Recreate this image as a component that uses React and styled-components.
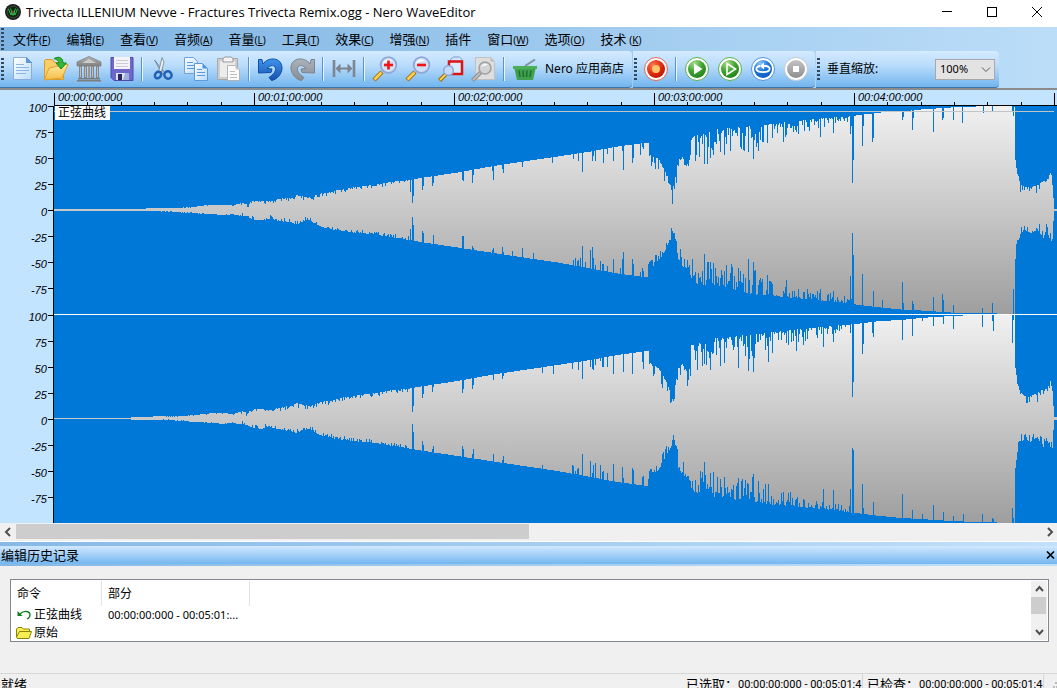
import styled, { createGlobalStyle } from "styled-components";

const App = () => {
  return (
    <Window>
      <GlobalStyle />
      <TitleBar>
        <AppIcon />
        <Title>
          Trivecta ILLENIUM Nevve - Fractures Trivecta Remix.ogg - Nero
          WaveEditor
        </Title>
        <WindowButtons />
      </TitleBar>
      <Menu />
      <Toolbars />
      <Editor />
      <HorizontalScroll />
      <History />
      <Status />
    </Window>
  );
};

export default App;

/* ---------- data ---------- */

const MENU = [
  ["文件", "F"],
  ["编辑", "E"],
  ["查看", "V"],
  ["音频", "A"],
  ["音量", "L"],
  ["工具", "T"],
  ["效果", "C"],
  ["增强", "N"],
  ["插件"],
  ["窗口", "W"],
  ["选项", "O"],
  ["技术 ", "K"],
];

const MINUTES = ["00", "01", "02", "03", "04", "05"];
const LEVELS = [100, 75, 50, 25, 0, -25, -50, -75];

// x, upper edge, lower edge of the left channel
const ENVELOPE = [
  [54, 209, 211], [145, 209, 211], [160, 208, 211], [180, 208, 212],
  [195, 207, 213], [212, 205, 214], [222, 205, 215], [233, 206, 214],
  [241, 203, 216], [247, 205, 216], [252, 201, 219], [262, 201, 220],
  [270, 202, 218], [280, 199, 221], [290, 198, 222], [296, 195, 224],
  [303, 197, 221], [310, 198, 220], [318, 194, 226], [328, 193, 228],
  [335, 191, 230], [345, 189, 231], [352, 188, 232], [375, 185, 234],
  [392, 182, 237], [405, 181, 239], [417, 179, 241], [457, 173, 247],
  [490, 167, 252], [523, 162, 257], [557, 157, 262], [590, 152, 268],
  [617, 147, 273], [647, 143, 277], [648, 143, 272], [649, 154, 262],
  [652, 157, 266], [658, 159, 261], [663, 168, 253], [667, 176, 246],
  [671, 186, 237], [672, 191, 231], [674, 182, 234], [676, 171, 246],
  [678, 160, 259], [682, 156, 266], [685, 161, 268], [688, 166, 267],
  [690, 154, 275], [691, 136, 283], [700, 135, 284], [715, 130, 288],
  [735, 128, 291], [755, 126, 294], [775, 124, 296], [800, 121, 298],
  [830, 118, 301], [855, 116, 304], [880, 113, 307], [900, 112, 309],
  [920, 110, 310], [950, 108, 312], [975, 107, 313], [996, 106, 313],
  [997, 106, 314], [1013, 106, 314], [1014, 107, 314], [1015, 160, 259],
  [1017, 173, 245], [1020, 184, 234], [1024, 187, 230], [1030, 188, 233],
  [1037, 185, 229], [1043, 181, 238], [1046, 181, 229], [1050, 173, 241],
  [1052, 177, 240], [1053, 198, 221], [1054, 209, 211], [1057, 209, 211],
];

// short dips: x, upper edge, lower edge (0 keeps the envelope)
const LEFT_DIPS = [
  [410, 192, 229], [412, 203, 217], [413, 196, 225], [422, 190, 231],
  [423, 186, 233], [432, 186, 0], [433, 183, 235], [462, 180, 236],
  [463, 181, 236], [472, 183, 246], [473, 175, 248], [492, 171, 250],
  [493, 180, 248], [502, 169, 247], [503, 173, 252], [512, 0, 251],
  [522, 167, 248], [533, 0, 253], [552, 163, 0], [573, 159, 260],
  [575, 0, 258], [577, 0, 261], [578, 161, 260], [580, 0, 258],
  [582, 172, 246], [585, 0, 262], [590, 0, 250], [592, 161, 247],
  [593, 156, 258], [595, 161, 265], [600, 0, 261], [602, 0, 264],
  [603, 163, 264], [607, 154, 266], [613, 161, 259], [620, 0, 268],
  [622, 151, 259], [623, 170, 252], [632, 163, 259], [633, 158, 264],
  [640, 155, 272], [642, 147, 268], [643, 149, 271], [704, 164, 254],
  [707, 164, 262], [708, 147, 262], [710, 158, 262], [713, 155, 263],
  [720, 152, 278], [724, 155, 271], [730, 151, 273], [740, 147, 271],
  [743, 150, 274], [748, 152, 259], [753, 159, 262], [754, 140, 271],
  [762, 142, 279], [767, 143, 275], [783, 142, 0], [786, 135, 280],
  [798, 134, 289], [820, 137, 289], [833, 133, 291], [850, 134, 276],
  [851, 126, 299], [852, 183, 233], [853, 160, 255], [862, 146, 274],
  [863, 126, 0], [872, 142, 0], [873, 138, 291], [882, 0, 300],
  [902, 120, 282], [903, 117, 303], [912, 130, 301], [913, 118, 304],
  [933, 132, 297], [942, 120, 294], [943, 118, 300], [953, 120, 305],
  [962, 123, 0], [982, 0, 308], [983, 113, 0], [992, 112, 303],
  [1012, 111, 0], [1013, 116, 289],
];

const RIGHT_DIPS = [
  [412, 412, 424], [413, 406, 432], [422, 398, 441], [423, 394, 445],
  [432, 392, 449], [433, 387, 446], [462, 393, 446], [463, 389, 449],
  [472, 389, 454], [473, 385, 449], [493, 380, 454], [502, 379, 460],
  [503, 376, 456], [542, 373, 465], [553, 374, 0], [572, 369, 465],
  [573, 0, 466], [575, 0, 471], [577, 0, 469], [578, 370, 468],
  [582, 379, 454], [590, 367, 461], [592, 369, 473], [593, 370, 465],
  [595, 365, 463], [600, 361, 465], [602, 367, 472], [603, 367, 471],
  [607, 367, 473], [613, 374, 464], [622, 0, 467], [623, 372, 478],
  [632, 374, 468], [633, 0, 470], [642, 362, 477], [643, 369, 476],
  [704, 364, 462], [710, 370, 473], [713, 353, 472], [720, 366, 479],
  [724, 363, 477], [733, 350, 485], [738, 368, 478], [745, 356, 480],
  [748, 371, 484], [752, 356, 477], [753, 372, 474], [758, 342, 481],
  [765, 350, 484], [768, 362, 484], [772, 353, 0], [781, 340, 493],
  [788, 345, 493], [796, 351, 499], [803, 345, 499], [823, 347, 489],
  [833, 342, 490], [850, 333, 489], [852, 397, 448], [853, 382, 450],
  [862, 354, 484], [863, 344, 508], [872, 333, 0], [873, 337, 502],
  [902, 340, 494], [912, 336, 510], [922, 321, 514], [933, 326, 505],
  [943, 324, 512], [953, 329, 516], [963, 0, 514], [982, 327, 514],
  [992, 321, 518], [993, 331, 519], [1012, 343, 508], [1013, 320, 518],
];

/* ---------- wave form ---------- */

const random = (seed) => {
  let state = seed;
  return () => {
    state = (state * 1103515245 + 12345) % 2147483648;
    return state / 2147483648;
  };
};

const sample = (x) => {
  const i = Math.max(
    1,
    ENVELOPE.findIndex((point) => point[0] >= x)
  );
  const [x0, top0, bottom0] = ENVELOPE[i - 1];
  const [x1, top1, bottom1] = ENVELOPE[i];
  const part = (x - x0) / (x1 - x0);
  return [top0 + (top1 - top0) * part, bottom0 + (bottom1 - bottom0) * part];
};

const roughness = (x) => {
  if (x < 160) return 0;
  if (x < 240) return 1;
  if (x < 410) return 4;
  if (x < 648) return 0;
  if (x < 691) return 14;
  if (x < 760) return 27;
  if (x < 850) return 18 - (x - 760) / 8;
  if (x > 1015 && x < 1053) return 9;
  return 0;
};

const channelPath = (shift, seed, dips, quietUntil) => {
  const next = random(seed);
  const byX = new Map(dips.map((dip) => [dip[0], dip]));
  const upper = [];
  const lower = [];
  for (let x = 54; x < 1057; x++) {
    const rough = roughness(x);
    // the loud middle part is ragged, the rest has only rare notches
    const power = x > 690 && x < 760 ? 2 : 3;
    const [top, bottom] = sample(x);
    const dip = byX.get(x) || [];
    let y1 = Math.floor(top + shift + rough * next() ** power);
    let y2 = Math.ceil(bottom + shift - rough * next() ** power);
    if (x < quietUntil) {
      y1 = 418;
      y2 = 419;
    }
    upper.push(`V${dip[1] || y1}H${x + 1}`);
    lower.unshift(`V${dip[2] || y2}H${x}`);
  }
  return `M54 ${209 + Math.floor(shift)}${upper.join("")}${lower.join("")}Z`;
};

const LEFT_PATH = channelPath(0, 71, LEFT_DIPS, 0);
const RIGHT_PATH = channelPath(208.5, 1234, RIGHT_DIPS, 131);

const Wave = () => (
  <WaveSvg
    viewBox="54 106 1003 417"
    preserveAspectRatio="none"
    shapeRendering="crispEdges"
  >
    <defs>
      {[106, 315].map((y) => (
        <linearGradient
          key={y}
          id={`wave${y}`}
          gradientUnits="userSpaceOnUse"
          x1="0"
          x2="0"
          y1={y}
          y2={y + 208}
        >
          <stop offset="0" stopColor="#f1f1f1" />
          <stop offset="0.5" stopColor="#c8c8c8" />
          <stop offset="1" stopColor="#9e9e9e" />
        </linearGradient>
      ))}
    </defs>
    <path d={LEFT_PATH} fill="url(#wave106)" />
    <path d={RIGHT_PATH} fill="url(#wave315)" />
    <rect x="54" y="314" width="1003" height="1" fill="#fff" />
    <rect x="54" y="111" width="1000" height="1" fill="#c0c4c8" />
  </WaveSvg>
);

const Editor = () => (
  <EditorGrid>
    <Scale>
      {["left", "right"].map((channel) => (
        <ScaleGroup key={channel}>
          {LEVELS.map((level) => (
            <Level key={level}>{level}</Level>
          ))}
        </ScaleGroup>
      ))}
    </Scale>
    <Track>
      <Ruler>
        {MINUTES.map((minute) => (
          <Minute key={minute}>
            {minute !== "05" && <Time>00:{minute}:00:000</Time>}
            {[0, 1, 2, 3, 4, 5].map((tick) => (
              <Tick key={tick} $major={tick === 0} />
            ))}
          </Minute>
        ))}
      </Ruler>
      <WaveArea>
        <Wave />
        <ClipName>正弦曲线</ClipName>
      </WaveArea>
    </Track>
  </EditorGrid>
);

/* ---------- title, menu, toolbars ---------- */

const AppIcon = () => (
  <svg width="16" height="16" viewBox="0 0 16 16">
    <circle cx="8" cy="8" r="8" fill="#1c1c1c" />
    <circle cx="8" cy="8" r="6" fill="#0b2a10" stroke="#3c4a3d" />
    <path
      d="M3.500 5 6 11l1.500-4M12.500 5 10 11 8.500 7M5.500 4.500 8 11.500l2.500-7"
      fill="none"
      stroke="#35b54a"
    />
    <circle cx="8" cy="8" r="1" fill="#7a3b2a" />
  </svg>
);

const WindowButtons = () => (
  <Controls>
    <ControlButton aria-label="最小化">
      <svg width="12" height="12" shapeRendering="crispEdges">
        <path d="M1 5.500h10" stroke="#000" />
      </svg>
    </ControlButton>
    <ControlButton aria-label="最大化">
      <svg width="12" height="12" shapeRendering="crispEdges">
        <path d="M1.500 1.500h9v9h-9z" stroke="#000" fill="none" />
      </svg>
    </ControlButton>
    <ControlButton aria-label="关闭">
      <svg width="12" height="12">
        <path d="m1 1 10 10M11 1 1 11" stroke="#000" />
      </svg>
    </ControlButton>
  </Controls>
);

const Menu = () => (
  <MenuBar>
    <Grip />
    {MENU.map(([name, letter]) => (
      <MenuItem key={name}>
        {name}
        {letter && (
          <Mnemonic>
            (<u>{letter}</u>)
          </Mnemonic>
        )}
      </MenuItem>
    ))}
  </MenuBar>
);

const Toolbars = () => (
  <ToolbarRow>
    <Band $width={632}>
      <Grip />
      <Tool label="新建"><NewIcon /></Tool>
      <Tool label="打开"><OpenIcon /></Tool>
      <Tool label="媒体库"><LibraryIcon /></Tool>
      <Tool label="保存"><SaveIcon /></Tool>
      <Separator />
      <Tool label="剪切"><CutIcon /></Tool>
      <Tool label="复制"><CopyIcon /></Tool>
      <Tool label="粘贴"><PasteIcon /></Tool>
      <Separator />
      <Tool label="撤消"><UndoIcon /></Tool>
      <Tool label="重做"><UndoIcon redo /></Tool>
      <Separator />
      <Tool label="适合窗口"><FitIcon /></Tool>
      <Separator />
      <Tool label="放大"><ZoomIcon sign="plus" /></Tool>
      <Tool label="缩小"><ZoomIcon sign="minus" /></Tool>
      <Tool label="缩放选区"><ZoomAreaIcon /></Tool>
      <Tool label="缩放页面"><ZoomPageIcon /></Tool>
      <Separator />
      <StoreButton>
        <BasketIcon />
        Nero 应用商店
      </StoreButton>
    </Band>
    <Band $width={182}>
      <Grip />
      <Tool label="录音"><RoundIcon tone="red" /></Tool>
      <Separator />
      <Tool label="播放">
        <RoundIcon tone="green"><path d="M10 7.500 18.500 13 10 18.500z" fill="#fff" /></RoundIcon>
      </Tool>
      <Tool label="播放选区">
        <RoundIcon tone="green">
          <path d="M10 7.500 18.500 13 10 18.500z" fill="none" stroke="#fff" strokeWidth="1.600" />
        </RoundIcon>
      </Tool>
      <Tool label="循环">
        <RoundIcon tone="blue">
          <path
            d="M10 10c-3 .5-4 2-3.500 3.500 1 3.500 12 3.500 13 0 .5-1.500-.5-3-3.500-3.500h-3"
            fill="none"
            stroke="#fff"
            strokeWidth="1.800"
          />
          <path d="M14 6.500v7L10 10z" fill="#fff" />
        </RoundIcon>
      </Tool>
      <Tool label="停止">
        <RoundIcon tone="grey"><path d="M10 10h6v6h-6z" fill="#fff" /></RoundIcon>
      </Tool>
    </Band>
    <Band $width={183}>
      <Grip />
      <ZoomLabel htmlFor="vertical-zoom">垂直缩放:</ZoomLabel>
      <SelectBox>
        <Select id="vertical-zoom" defaultValue="100%">
          <option>50%</option>
          <option>100%</option>
          <option>200%</option>
        </Select>
        <SelectArrow width="10" height="6" viewBox="0 0 10 6">
          <path d="m1 .5 4 4 4-4" fill="none" stroke="#555" />
        </SelectArrow>
      </SelectBox>
    </Band>
    <Gradients />
  </ToolbarRow>
);

const Tool = ({ label, children }) => (
  <ToolButton aria-label={label}>{children}</ToolButton>
);

/* ---------- toolbar icons ---------- */

const Icon = ({ children }) => (
  <svg width="26" height="26" viewBox="0 0 26 26">
    {children}
  </svg>
);

const Gradients = () => (
  <svg width="0" height="0">
    <defs>
      <linearGradient id="paper" x2="1" y2="1">
        <stop offset="0" stopColor="#fff" />
        <stop offset="1" stopColor="#b9dcfa" />
      </linearGradient>
      <linearGradient id="folder" x2="0" y2="1">
        <stop offset="0" stopColor="#ffe9a0" />
        <stop offset="1" stopColor="#f3bd45" />
      </linearGradient>
      <linearGradient id="stone" x2="0" y2="1">
        <stop offset="0" stopColor="#b4b4b4" />
        <stop offset="1" stopColor="#808080" />
      </linearGradient>
      <linearGradient id="arrow" x2="0" y2="1">
        <stop offset="0" stopColor="#3f95ee" />
        <stop offset="1" stopColor="#1550ae" />
      </linearGradient>
      <linearGradient id="dimArrow" x2="0" y2="1">
        <stop offset="0" stopColor="#adb3ba" />
        <stop offset="1" stopColor="#868c94" />
      </linearGradient>
      <radialGradient id="red" cx="0.35" cy="0.3" r="0.8">
        <stop offset="0" stopColor="#ff7a55" />
        <stop offset="0.6" stopColor="#e0260d" />
        <stop offset="1" stopColor="#b01505" />
      </radialGradient>
      <radialGradient id="green" cx="0.35" cy="0.2" r="0.9">
        <stop offset="0" stopColor="#a5dd8c" />
        <stop offset="0.5" stopColor="#3fa32e" />
        <stop offset="1" stopColor="#1c7d16" />
      </radialGradient>
      <radialGradient id="blue" cx="0.35" cy="0.2" r="0.9">
        <stop offset="0" stopColor="#8fc5fb" />
        <stop offset="0.5" stopColor="#1a73dd" />
        <stop offset="1" stopColor="#0f57b8" />
      </radialGradient>
      <linearGradient id="grey" x2="0" y2="1">
        <stop offset="0" stopColor="#c4c4c4" />
        <stop offset="1" stopColor="#8e8e8e" />
      </linearGradient>
    </defs>
  </svg>
);

const NewIcon = () => (
  <Icon>
    <path d="M3.500 1.500h13l5 5v17h-18z" fill="url(#paper)" stroke="#86aedb" />
    <path d="M16.500 1.500v5h5z" fill="#5b9be0" stroke="#5f92cf" />
    <path d="M6 8.500h8M6 11.500h13M6 14.500h13M6 17.500h10" stroke="#8db3e0" />
  </Icon>
);

const OpenIcon = () => (
  <Icon>
    <path d="M1.500 23.500V4.500l1-1h7l2 3h9v17z" fill="#f7cf66" stroke="#d99b2a" />
    <path d="M1.500 24 6 12l9-2 3-1.500h7L19 22z" fill="url(#folder)" stroke="#dfa02f" />
    <path d="M11 2.500c6-3 9 0 9 4.500h3.500l-5.500 6-5-6h3c0-2-2-3.500-5-4.500z" fill="#36b53b" stroke="#178a26" />
  </Icon>
);

const LibraryIcon = () => (
  <Icon>
    <path d="M13 .5 25 6v4H1V6z" fill="url(#stone)" stroke="#808080" strokeWidth=".8" />
    <path d="m6 7 7-4 7 4z" fill="#ccc" />
    <path d="M2 22h22v1.500H2zM1 24h24v1.500H1z" fill="#7c7c7c" />
    <path d="M4.500 10v12M9.500 10v12M16.500 10v12M21.500 10v12" stroke="#858585" strokeWidth="3" />
    <path d="M4.500 11v10M9.500 11v10M16.500 11v10M21.500 11v10" stroke="#bdbdbd" />
    <path d="M13 10v12" stroke="#989898" strokeWidth="2" />
  </Icon>
);

const SaveIcon = () => (
  <Icon>
    <path d="M2 1.500h22v23H5l-3-3z" fill="#6f68cc" stroke="#4f49ac" />
    <path d="M5 1h16v12H5z" fill="#f4f4f8" />
    <path d="M7 4.500h12M7 7.500h12M7 10.500h12" stroke="#ccc8d8" />
    <path d="M7 17h13v7H7z" fill="#dce4ef" />
    <path d="M9 18h4v6H9z" fill="#2b2560" />
    <path d="M16 17h4v7h-6z" fill="#9faedc" />
  </Icon>
);

const CutIcon = () => (
  <Icon>
    <path d="M4.500 4 15 17l-2.500 1.500z" fill="#aeb9c6" stroke="#70808f" strokeWidth=".8" />
    <path d="M12 1.500 14 6l-3 11-2.500-.5z" fill="#eef1f4" stroke="#70808f" strokeWidth=".8" />
    <ellipse cx="8" cy="19" rx="2.800" ry="3.500" transform="rotate(40 8 19)" fill="none" stroke="#1f62b8" strokeWidth="2.500" />
    <ellipse cx="18" cy="19" rx="3.500" ry="3.800" transform="rotate(-40 18 19)" fill="none" stroke="#1f62b8" strokeWidth="2.500" />
  </Icon>
);

const CopyIcon = () => (
  <Icon>
    <path d="M1.500 1.500h9l4 4v12h-13z" fill="url(#paper)" stroke="#6ea3df" />
    <path d="M4 6.500h6M4 9.500h7M4 12.500h7" stroke="#5b98dd" />
    <path d="M11.500 7.500h8l5 5v12h-13z" fill="url(#paper)" stroke="#5b98dd" />
    <path d="M19.500 7.500v5h5z" fill="#4a94e6" />
    <path d="M14 13.500h5M14 16.500h8M14 19.500h8" stroke="#5b98dd" />
  </Icon>
);

const PasteIcon = () => (
  <Icon>
    <path d="M1.500 2.500h20v21h-20z" fill="#cdcdcd" stroke="#a8a8a8" />
    <path d="M4 5h15v16H4z" fill="#ececec" />
    <path d="M7 2.500 9 1h6l2 1.500V6H7z" fill="#f3f3f3" stroke="#999" />
    <path d="M11.500 9.500h8l4 4v11h-12z" fill="#fafafa" stroke="#b4b4b4" />
    <path d="M19.500 9.500v4h4z" fill="#c8c8c8" />
    <path d="M14 15.500h5M14 18.500h7M14 21.500h7" stroke="#bbb" />
  </Icon>
);

const UndoIcon = ({ redo }) => (
  <Icon>
    <path
      transform={redo ? "matrix(-1 0 0 1 26 0)" : undefined}
      d="M1.500 3.500H5L6 8C11 .5 25 1 25 12c0 6-5 11.500-10.500 12.500l-2.500-3c5-3 8-7.500 6-10.500-2-2.500-5-1.500-8 1.500l5 .5-1 3.500-12.500.5z"
      fill={redo ? "url(#dimArrow)" : "url(#arrow)"}
      stroke={redo ? "#7c848e" : "#0f4ea6"}
    />
  </Icon>
);

const FitIcon = () => (
  <Icon>
    <path d="M3 4v17M23 4v17" stroke="#7c8590" strokeWidth="2.600" />
    <path d="M6 12.500h14" stroke="#7c8590" strokeWidth="2" />
    <path d="m4.500 12.500 5-5v10zM21.500 12.500l-5-5v10z" fill="#7c8590" />
  </Icon>
);

const ZoomIcon = ({ sign }) => (
  <Icon>
    <path d="m2 24 8-8" stroke="#9c6a10" strokeWidth="4.500" />
    <path d="m2.500 23.500 7-7" stroke="#ffd24a" strokeWidth="2.500" />
    <circle cx="16.500" cy="9" r="7.800" fill="#cfe0f7" stroke="#8fa6da" strokeWidth="1.800" />
    <path d="M10.500 8c1-4 6-6 9.500-3-4 0-7 1-9.500 3z" fill="#fff" />
    <path d="M12 9h9" stroke="#f01414" strokeWidth="2.600" />
    {sign === "plus" && <path d="M16.500 4.500v9" stroke="#f01414" strokeWidth="2.600" />}
  </Icon>
);

const ZoomAreaIcon = () => (
  <Icon>
    <path d="M12.500 5V3.500l3-2.500h6l2.500 2.500V5" fill="#cfe3f8" stroke="#7b9cc8" />
    <path d="M11 5.500h13v12.500h-13z" fill="#dcebfb" stroke="#dc1414" strokeWidth="2.500" />
    <path d="m1.500 24.500 7-7" stroke="#9c6a10" strokeWidth="4" />
    <path d="m2 24 6-6" stroke="#ffd24a" strokeWidth="2" />
    <circle cx="10.500" cy="14.500" r="4.800" fill="#c4daf6" stroke="#8fa6da" strokeWidth="1.500" />
  </Icon>
);

const ZoomPageIcon = () => (
  <Icon>
    <path d="M4.500 1.500h15l4 4v18h-19z" fill="#dedede" stroke="#c0c0c0" />
    <path d="M19.500 1.500v4h4z" fill="#bbb" />
    <path d="m1.500 24.500 8-8" stroke="#909090" strokeWidth="4" />
    <path d="m2 24 7-7" stroke="#bbb" strokeWidth="2" />
    <circle cx="14" cy="12" r="6" fill="#d4d4d4" stroke="#a2a2a2" strokeWidth="1.600" />
    <path d="M10 11c1-3 5-4 7-2-3 0-5 1-7 2z" fill="#fff" />
  </Icon>
);

const BasketIcon = () => (
  <Icon>
    <path d="M13 10 23 3.500" stroke="#7d9299" strokeWidth="2" />
    <path d="M1 10h24v3H1z" fill="#4caf58" />
    <path d="M2.500 13h21l-2.500 11H5z" fill="#3fa04d" />
    <path d="M7 14.500 8 21M11 14.500l.5 6.500M15 14.500 14.500 21M19 14.500 18 21" stroke="#1f6f31" strokeWidth="1.500" />
  </Icon>
);

const RoundIcon = ({ tone, children }) => (
  <Icon>
    <circle
      cx="13"
      cy="13"
      r="11.500"
      fill="#fff"
      stroke={{ red: "#e2654f", green: "#58b048", blue: "#4b93df", grey: "#c5c9ce" }[tone]}
    />
    <circle cx="13" cy="13" r="9" fill={`url(#${tone})`} />
    {tone === "red" && <circle cx="13" cy="13" r="4" fill="#ffc56b" />}
    {children}
  </Icon>
);

/* ---------- lower part ---------- */

const HorizontalScroll = () => (
  <ScrollX>
    <ArrowButton aria-label="向左"><Chevron d="M6 1 2 5l4 4" /></ArrowButton>
    <Rail>
      <ThumbX />
    </Rail>
    <ArrowButton aria-label="向右"><Chevron d="m3 1 4 4-4 4" /></ArrowButton>
  </ScrollX>
);

const Chevron = ({ d }) => (
  <svg width="9" height="10" viewBox="0 0 9 10">
    <path d={d} fill="none" stroke="#505050" strokeWidth="2" />
  </svg>
);

const History = () => (
  <Panel>
    <PanelTitle>
      编辑历史记录
      <CloseButton aria-label="关闭">
        <svg width="9" height="8" viewBox="0 0 9 8">
          <path d="m1 .5 7 7M8 .5l-7 7" stroke="#000" strokeWidth="1.600" />
        </svg>
      </CloseButton>
    </PanelTitle>
    <ListBox>
      <Table>
        <thead>
          <tr>
            <HeadCell $width={91}>命令</HeadCell>
            <HeadCell $width={148}>部分</HeadCell>
          </tr>
        </thead>
        <tbody>
          <tr>
            <Cell>
              <Command>
                <svg width="16" height="14" viewBox="0 0 16 14">
                  <path d="M4 6c4-4 10-3 10 1 0 2-1 3-3 4" fill="none" stroke="#0a7d1c" strokeWidth="1.300" />
                  <path d="M1.500 3v5h5z" fill="#0a7d1c" />
                </svg>
                正弦曲线
              </Command>
            </Cell>
            <TimeCell>00:00:00:000 - 00:05:01:...</TimeCell>
          </tr>
          <tr>
            <Cell>
              <Command>
                <svg width="16" height="14" viewBox="0 0 16 14">
                  <path d="M.5 11V3L2 1.500h4L7.500 3h6v2.500M.5 11l3-5.500h12L13 12.500H1.500z" fill="#f6ee54" stroke="#8a8405" />
                </svg>
                原始
              </Command>
            </Cell>
            <TimeCell />
          </tr>
        </tbody>
      </Table>
      <ScrollY>
        <ArrowButton aria-label="向上"><Chevron d="m1 7 3.500-4L8 7" /></ArrowButton>
        <ThumbY />
        <ArrowButton aria-label="向下"><Chevron d="m1 3 3.500 4L8 3" /></ArrowButton>
      </ScrollY>
    </ListBox>
  </Panel>
);

const Status = () => (
  <StatusBar>
    <Ready>就绪</Ready>
    <StatusField>
      已选取：<Range>00:00:00:000 - 00:05:01:4</Range>
    </StatusField>
    <StatusField>
      已检查：<Range>00:00:00:000 - 00:05:01:4</Range>
    </StatusField>
    <SizeGrip width="4" height="8" fill="#bbb">
      <path d="M2 0h2v2H2zM0 4h2v2H0zM3 4h1v2H3z" />
    </SizeGrip>
  </StatusBar>
);

/* ---------- styles ---------- */

const GlobalStyle = createGlobalStyle`
  * {
    box-sizing: border-box;
  }
  body {
    margin: 0;
    overflow: hidden;
    background: #f0f0f0;
    color: #000;
    font: 12px/16px "Noto Sans", "Noto Sans CJK SC", sans-serif;
  }
  button, select {
    font: inherit;
    color: inherit;
    padding: 0;
    border: none;
    background: none;
  }
  svg {
    display: block;
    flex: none;
  }
`;

const Window = styled.div`
  display: flex;
  flex-direction: column;
  height: 100vh;
  overflow: hidden;
  white-space: nowrap;

  > * {
    flex: none;
  }
`;

const TitleBar = styled.header`
  display: flex;
  align-items: center;
  height: 27px;
  padding: 0 0 4px 5px;
  gap: 5px;
  background: #fff;
`;

const Title = styled.h1`
  flex: 1;
  margin: 0;
  font-family: "Open Sans", sans-serif;
  font-size: 13px;
  font-weight: 400;
  line-height: 18px;
`;

const Controls = styled.div`
  display: flex;
  gap: 5px;
`;

const ControlButton = styled.button`
  display: grid;
  place-items: center;
  width: 40px;
  height: 23px;
`;

const MenuBar = styled.nav`
  display: flex;
  align-items: center;
  height: 24px;
  background: linear-gradient(90deg, #7db3e2, #bbddf8);
`;

const Grip = styled.span`
  flex: none;
  width: 3px;
  height: 22px;
  margin: 0 2px 0 1px;
  background: repeating-linear-gradient(#31485f 0 2px, transparent 2px 4px);
`;

const MenuItem = styled.button`
  display: flex;
  align-items: center;
  height: 22px;
  padding: 0 9px 0 7px;
  font-family: "Noto Sans CJK SC", sans-serif;
  font-size: 13px;
  white-space: pre;
`;

const Mnemonic = styled.span`
  padding-top: 2px;
  font: 10px/14px "Noto Sans", sans-serif;
`;

const ToolbarRow = styled.div`
  display: flex;
  gap: 1px;
  height: 39px;
  border-bottom: 2px solid #8b8b8b;
  background: linear-gradient(90deg, #7db3e2, #bbddf8);
`;

const Band = styled.div`
  display: flex;
  align-items: center;
  width: ${(props) => props.$width}px;
  height: 37px;
  border-bottom: 1px solid #3f74a8;
  border-radius: 0 4px 4px 0;
  background: linear-gradient(#d4eaff, #b9dcfb 40%, #72b5ee);
`;

const ToolButton = styled.button`
  display: grid;
  place-items: center;
  flex: none;
  width: 33px;
  height: 30px;
`;

const Separator = styled.span`
  flex: none;
  width: 2px;
  height: 24px;
  margin: 0 3px;
  border-left: 1px solid #5a93c8;
  background: #eaf5ff;
`;

const StoreButton = styled.button`
  display: flex;
  align-items: center;
  gap: 7px;
  padding: 0 4px;
`;

const ZoomLabel = styled.label`
  flex: 1;
  padding-left: 5px;
`;

const SelectBox = styled.div`
  position: relative;
  margin-right: 4px;
`;

const Select = styled.select`
  appearance: none;
  display: block;
  width: 60px;
  height: 21px;
  padding-left: 4px;
  border: 1px solid #a8a8a8;
  border-radius: 0;
  background: #e3e3e3;
  font-size: 11px;
`;

const SelectArrow = styled.svg`
  position: absolute;
  right: 4px;
  top: 8px;
  pointer-events: none;
`;

const EditorGrid = styled.main`
  display: flex;
  height: 433px;
  background: #c3e4ff;
`;

const Scale = styled.div`
  display: flex;
  flex-direction: column;
  gap: 1px;
  width: 53px;
  padding-top: 3px;
`;

const ScaleGroup = styled.div`
  font: italic 11px/14px "Liberation Sans", sans-serif;
`;

const Level = styled.div`
  display: flex;
  align-items: center;
  justify-content: flex-end;
  gap: 1px;
  height: 26px;
  padding-top: 3px;

  &::after {
    content: "";
    width: 5px;
    height: 1px;
    margin-bottom: 3px;
    background: #000;
  }
`;

const Track = styled.div`
  flex: 1;
  display: flex;
  flex-direction: column;
  min-width: 0;
`;

const Ruler = styled.div`
  display: flex;
  height: 16px;
  margin-left: 1px;
  border-bottom: 1px solid #000;
  overflow: hidden;
`;

const Minute = styled.div`
  position: relative;
  display: flex;
  align-items: flex-end;
  flex: none;
  width: 200px;
`;

const Time = styled.span`
  position: absolute;
  left: 4px;
  top: 0;
  font: italic 11px/14px "Liberation Sans", sans-serif;
`;

const Tick = styled.span`
  flex: 1;
  height: ${(props) => (props.$major ? 12 : 3)}px;
  border-left: 1px solid #000;
`;

const WaveArea = styled.div`
  position: relative;
  flex: 1;
  border-left: 1px solid #000;
  background: #0078d7;
`;

const WaveSvg = styled.svg`
  width: 100%;
  height: 417px;
`;

const ClipName = styled.span`
  position: absolute;
  left: 1px;
  top: 0;
  padding: 0 4px 0 3px;
  background: #fff;
  font-size: 12px;
  line-height: 14px;
`;

const ScrollX = styled.div`
  display: flex;
  height: 19px;
  padding: 1px 0 2px;
  border-bottom: 1px solid #fff;
  background: #f0f0f0;
`;

const ArrowButton = styled.button`
  display: grid;
  place-items: center;
  width: 16px;
  height: 16px;
`;

const Rail = styled.div`
  flex: 1;
`;

const ThumbX = styled.div`
  width: 50%;
  height: 15px;
  background: #cdcdcd;
`;

const Panel = styled.section`
  height: 131px;
`;

const PanelTitle = styled.h2`
  display: flex;
  align-items: center;
  justify-content: space-between;
  height: 24px;
  margin: 0;
  padding: 0 2px 0 1px;
  border: solid transparent;
  border-width: 4px 0 2px;
  background:
    linear-gradient(#d0e8ff, #74b7f0) padding-box,
    linear-gradient(90deg, #86b9e6, #c2e0f9) border-box;
  font-size: 13px;
  font-weight: 400;
`;

const CloseButton = styled.button`
  display: grid;
  place-items: center;
`;

const ListBox = styled.div`
  display: flex;
  justify-content: space-between;
  align-items: flex-start;
  height: 63px;
  margin: 13px 8px 0 10px;
  padding: 1px 1px 1px 0;
  border: 1px solid #828790;
  background: #fff;
`;

const Table = styled.table`
  border-collapse: separate;
  border-spacing: 0;
  table-layout: fixed;
  width: 239px;
`;

const HeadCell = styled.th`
  width: ${(props) => props.$width}px;
  height: 25px;
  padding: 0 0 0 6px;
  border-right: 1px solid #e2e2e2;
  font-weight: 400;
  text-align: left;
`;

const Cell = styled.td`
  height: 18px;
  padding: 0 0 0 5px;
  line-height: 16px;
`;

const TimeCell = styled(Cell)`
  padding-left: 6px;
  font-size: 11px;
`;

const Command = styled.span`
  display: flex;
  align-items: center;
  gap: 2px;
`;

const ScrollY = styled.div`
  display: flex;
  flex-direction: column;
  width: 16px;
  height: 59px;
  background: #f0f0f0;
`;

const ThumbY = styled.div`
  height: 17px;
  margin: 0 1px auto 0;
  background: #cdcdcd;
`;

const StatusBar = styled.footer`
  display: flex;
  height: 24px;
  border-top: 1px solid #d7d7d7;
  line-height: 20px;
`;

const Ready = styled.span`
  flex: 1;
  padding-left: 1px;
  font-size: 13px;
`;

const StatusField = styled.span`
  display: flex;
  width: 181px;
  padding-left: 4px;
  border-right: 1px solid #d7d7d7;
  font-size: 13px;
`;

const Range = styled.span`
  font: 11px/22px Roboto, sans-serif;
`;

const SizeGrip = styled.svg`
  margin: 8px 0 0 9px;
`;
